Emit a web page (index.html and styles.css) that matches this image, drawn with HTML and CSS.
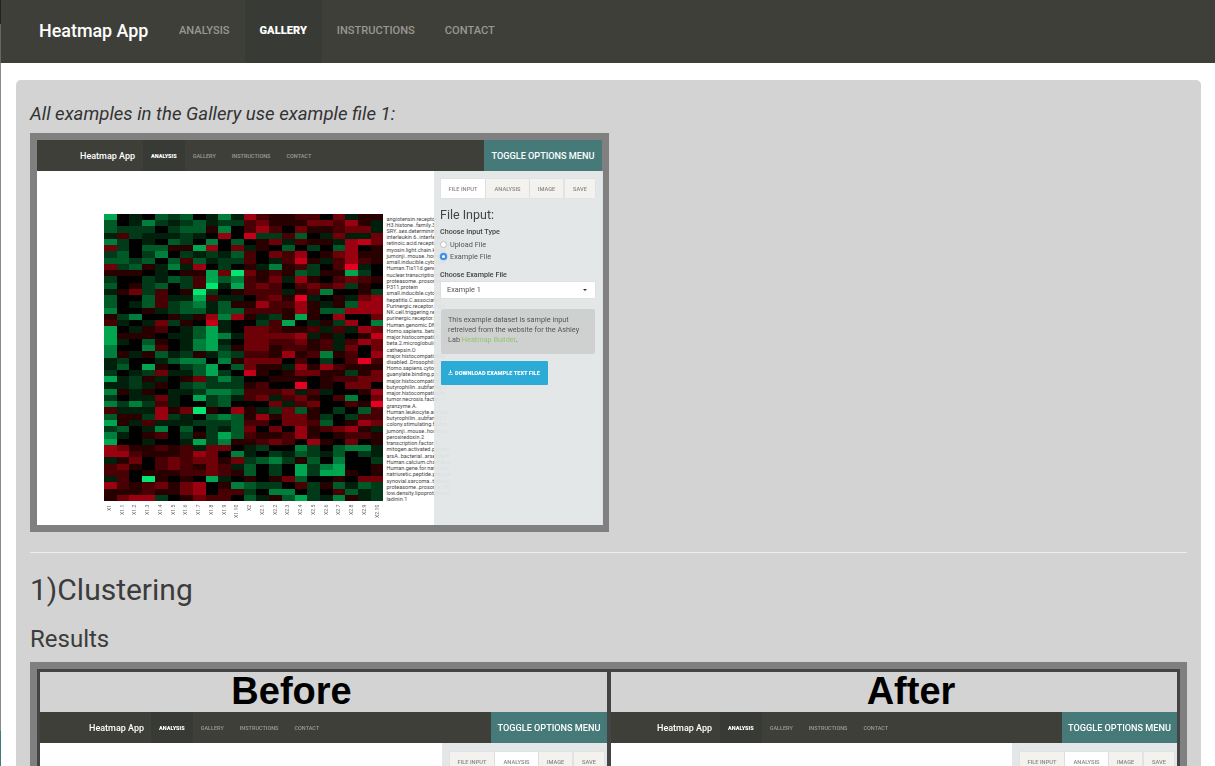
FILE: index.html
```html
<!DOCTYPE html>
<html lang="en">
<head>
<meta charset="utf-8">
<title>Heatmap App</title>
<link rel="stylesheet" href="styles.css">
</head>
<body>
<div class="edge"></div>
<nav class="navbar">
  <a class="brand">Heatmap App</a>
  <a class="nav-item">Analysis</a>
  <a class="nav-item active">Gallery</a>
  <a class="nav-item">Instructions</a>
  <a class="nav-item">Contact</a>
</nav>
<main class="well">
  <p class="lead">All examples in the Gallery use example file 1:</p>
  <div class="frame">
    <div class="mock mock-main">
      <div class="m-nav">
        <span class="m-brand">Heatmap App</span>
        <span class="m-item active">Analysis</span>
        <span class="m-item">Gallery</span>
        <span class="m-item">Instructions</span>
        <span class="m-item">Contact</span>
        <span class="m-toggle">Toggle Options Menu</span>
      </div>
      <div class="m-body">
        <div class="m-plot">
          <div class="hm-row">
            <div class="hm-col">
              <div class="heatmap" id="heatmap"></div>
              <div class="xlabels">
                <span>X1</span><span>X1.1</span><span>X1.2</span><span>X1.3</span><span>X1.4</span><span>X1.5</span><span>X1.6</span><span>X1.7</span><span>X1.8</span><span>X1.9</span><span>X1.10</span><span>X2</span><span>X2.1</span><span>X2.2</span><span>X2.3</span><span>X2.4</span><span>X2.5</span><span>X2.6</span><span>X2.7</span><span>X2.8</span><span>X2.9</span><span>X2.10</span>
              </div>
            </div>
            <div class="ylabels">
              <span>angiotensin.receptor..1</span><span>H3.histone..family.3A</span><span>SRY..sex.determining.r</span><span>interleukin.6..interferon</span><span>retinoic.acid.receptor..</span><span>myosin.light.chain.kinas</span><span>jumonji..mouse..homolo</span><span>small.inducible.cytokine</span><span>Human.Tis11d.gene</span><span>nuclear.transcription.fa</span><span>proteasome..prosome..</span><span>P311.protein</span><span>small.inducible.cytokine</span><span>hepatitis.C.associated.</span><span>Purinergic.receptor..fam</span><span>NK.cell.triggering.recep</span><span>purinergic.receptor.P2Y</span><span>Human.genomic.DNA..ch</span><span>Homo.sapiens..beta..1.</span><span>major.histocompatibility</span><span>beta.2.microglobulin</span><span>cathepsin.O</span><span>major.histocompatibility</span><span>disabled..Drosophila..ho</span><span>Homo.sapiens.cytochron</span><span>guanylate.binding.protei</span><span>major.histocompatibility</span><span>butyrophilin..subfamily.3</span><span>major.histocompatibility</span><span>tumor.necrosis.factor..li</span><span>granzyme.A.</span><span>Human.leukocyte.antigen</span><span>butyrophilin..subfamily.3</span><span>colony.stimulating.factor.1</span><span>jumonji..mouse..homolog</span><span>peroxiredoxin.2</span><span>transcription.factor.4</span><span>mitogen.activated.protein</span><span>arsA..bacterial..arsenite.tr</span><span>Human.calcium.channel.a</span><span>Human.gene.for.natriureti</span><span>natriuretic.peptide.precurs</span><span>synovial.sarcoma..translo</span><span>proteasome..prosome..mi</span><span>low.density.lipoprotein.rec</span><span>ladinin.1</span>
            </div>
          </div>
        </div>
        <aside class="m-side">
          <div class="m-tabs">
            <span class="m-tab current">File Input</span>
            <span class="m-tab">Analysis</span>
            <span class="m-tab">Image</span>
            <span class="m-tab">Save</span>
          </div>
          <h4 class="m-title">File Input:</h4>
          <div class="m-label m-label-first">Choose Input Type</div>
          <div class="m-radio"><i class="dot"></i>Upload File</div>
          <div class="m-radio"><i class="dot checked"></i>Example File</div>
          <div class="m-label m-label-second">Choose Example File</div>
          <div class="m-select">Example 1<i class="caret"></i></div>
          <div class="m-note">
            <span class="m-line">This example dataset is sample input retreived from the website for the Ashley</span>
            <span class="m-line">Lab <a class="m-link">Heatmap Builder</a>.</span>
          </div>
          <div class="m-download">
            <svg class="m-icon" viewBox="0 0 10 10"><path d="M4 0.5h2v3.5h2L5 7 2 4h2zM0.5 7.5h2L5 9l2.500-1.500h2V9.500h-9z" fill="#fff"/></svg>
            Download Example Text File
          </div>
        </aside>
      </div>
    </div>
  </div>
  <hr class="rule">
  <h2 class="section-title">1)Clustering</h2>
  <h3 class="sub-title">Results</h3>
  <div class="frame frame-wide">
    <div class="compare">
      <section class="pane">
        <div class="pane-head pane-before">Before</div>
        <div class="mock mock-before">
          <div class="m-nav">
            <span class="m-brand">Heatmap App</span>
            <span class="m-item active">Analysis</span>
            <span class="m-item">Gallery</span>
            <span class="m-item">Instructions</span>
            <span class="m-item">Contact</span>
            <span class="m-toggle">Toggle Options Menu</span>
          </div>
          <div class="m-body">
            <div class="m-plot"></div>
            <aside class="m-side">
              <div class="m-tabs">
                <span class="m-tab">File Input</span>
                <span class="m-tab current">Analysis</span>
                <span class="m-tab">Image</span>
                <span class="m-tab">Save</span>
              </div>
            </aside>
          </div>
        </div>
      </section>
      <section class="pane">
        <div class="pane-head pane-after">After</div>
        <div class="mock mock-after">
          <div class="m-nav">
            <span class="m-brand">Heatmap App</span>
            <span class="m-item active">Analysis</span>
            <span class="m-item">Gallery</span>
            <span class="m-item">Instructions</span>
            <span class="m-item">Contact</span>
            <span class="m-toggle">Toggle Options Menu</span>
          </div>
          <div class="m-body">
            <div class="m-plot"></div>
            <aside class="m-side">
              <div class="m-tabs">
                <span class="m-tab">File Input</span>
                <span class="m-tab current">Analysis</span>
                <span class="m-tab">Image</span>
                <span class="m-tab">Save</span>
              </div>
            </aside>
          </div>
        </div>
      </section>
    </div>
  </div>
</main>
<script src="heatmap.js"></script>
</body>
</html>
```
FILE: styles.css
```css
* { box-sizing: border-box; }
html, body { height: 766px; overflow: hidden; }
body { margin: 0; background: #fff; color: #3c3c3c; font-family: Roboto, "Liberation Sans", sans-serif; }

.edge { position: absolute; left: 0; top: 0; width: 1px; height: 766px; z-index: 5;
  background: linear-gradient(#23231f 0, #23231f 24px, #666 24px, #666 63px, #8a8a8a 63px, #8a8a8a 731px, #3f7a78 731px); }

.navbar { display: flex; align-items: center; height: 63px; padding: 0 0 2px 39px; background: #3f3f39; }
.brand { width: 125px; color: #fff; font-size: 17.900px; font-weight: 500; }
.nav-item { display: flex; align-items: center; height: 63px; margin-bottom: -2px; padding: 0 15px 2px; color: #98988f; font-size: 11.100px; font-weight: 500; text-transform: uppercase; }
.nav-item.active { background: #383a35; color: #fff; font-weight: 900; }

.well { height: 686px; margin: 17px 14px 0 16px; padding: 22px 14px 0; overflow: hidden; background: #d3d3d3; border-radius: 5px 5px 0 0; }
.lead { margin: 0 0 7px; font-size: 18.600px; line-height: 24px; font-style: italic; color: #333; }

.frame { width: 579px; border: 7px solid #808080; }
.frame-wide { width: 1157px; height: 104px; border-bottom: 0; }
.rule { margin: 20px 0 0; border: 0; border-top: 1px solid #eeeeea; }
.section-title { margin: 18px 0 0; font-size: 30px; line-height: 38px; font-weight: 400; color: #3c3c3c; }
.sub-title { margin: 16px 0 8px; font-size: 24px; line-height: 29px; font-weight: 400; color: #3c3c3c; }

.compare { display: grid; grid-template-columns: 567px 566px; column-gap: 4px; height: 100%; padding: 3px 3px 0; background: #444; overflow: hidden; }
.pane { background: #d3d3d3; min-width: 0; height: 94px; }
.pane-head { height: 40px; font-family: "Liberation Sans", Arial, sans-serif; font-size: 38px; line-height: 38px; font-weight: 700; text-align: center; color: #000; }
.pane-before { padding-right: 64px; }
.pane-after { padding-left: 34px; }

.mock { filter: blur(.25px); background: #fff; }
.mock-main { height: 385px; }
.mock-before, .mock-after { height: 54px; overflow: hidden; }
.m-nav { display: flex; align-items: center; height: 31px; background: #3f3f39; }
.m-brand { color: #fff; font-size: 9px; font-weight: 500; white-space: nowrap; }
.m-item { display: flex; align-items: center; height: 31px; padding: 0 8px; color: #9c9c92; font-size: 5.500px; font-weight: 500; text-transform: uppercase; }
.m-item.active { background: #383a35; color: #fff; font-weight: 900; }
.m-toggle { display: flex; align-items: center; justify-content: center; margin-left: auto; width: 118px; height: 31px; background: #457a78; color: #fff; font-size: 9.150px; font-weight: 500; text-transform: uppercase; }
.mock-before .m-toggle { width: 116px; }
.mock-after .m-toggle { width: 115px; }
.mock-main .m-brand { margin-left: 43px; margin-right: 8px; }
.mock-before .m-brand { margin-left: 49px; margin-right: 7px; }
.mock-after .m-brand { margin-left: 46px; margin-right: 8px; }

.m-body { display: flex; height: 354px; }
.m-plot { width: 397px; flex: none; padding: 43px 0 0 67px; }
.mock-before .m-plot { width: 402px; }
.mock-after .m-plot { width: 401px; }
.m-side { position: relative; z-index: 1; flex: 1; padding: 8px 8px 0 7px; background: rgba(227, 230, 230, .95); }
.mock-before .m-side, .mock-after .m-side { padding: 9px 0 0 8px; }

.hm-row { display: flex; gap: 3px; width: 360px; }
.hm-col { width: 279.500px; flex: none; }
.heatmap { display: grid; grid-template-columns: repeat(22, 1fr); grid-template-rows: repeat(46, 1fr); height: 287px; }
.xlabels { display: grid; grid-template-columns: repeat(22, 1fr); margin: 4px 0 0 -1px; }
.xlabels span { writing-mode: vertical-rl; transform: rotate(180deg); justify-self: center; font-size: 5.200px; color: #666; height: 22px; text-align: right; line-height: 1; }
.ylabels { display: grid; grid-template-rows: repeat(46, 1fr); height: 287px; margin-top: 1.500px; font-size: 5.500px; color: #444; white-space: nowrap; width: 80px; }
.ylabels span { line-height: 6.240px; }

.l-n { background: #000; }
.l-a { background: #00200c; }
.l-b { background: #003a18; }
.l-c { background: #005a28; }
.l-d { background: #007f3c; }
.l-e { background: #00a650; }
.l-f { background: #00e870; }
.l-A { background: #280000; }
.l-B { background: #480004; }
.l-C { background: #6e0008; }
.l-D { background: #9a000f; }
.l-E { background: #c40018; }
.l-F { background: #e80022; }

.m-tabs { display: flex; gap: 1px; height: 19px; }
.m-tab { display: flex; flex: none; align-items: center; justify-content: center; height: 19px; background: #f4f2ee; color: #888; font-size: 5.700px; font-weight: 500; text-transform: uppercase; box-shadow: 0 0 1px rgba(0,0,0,.1); }
.m-tab:nth-child(1) { width: 44px; }
.m-tab:nth-child(2) { width: 43px; }
.m-tab:nth-child(3) { width: 33px; }
.m-tab:nth-child(4) { width: 30px; margin-left: 1px; }
.m-tab.current { background: #fff; }
.m-title { margin: 9px 0 0 -1px; font-size: 12.500px; line-height: 15px; font-weight: 400; color: #444; }
.m-label { font-size: 7.200px; line-height: 8px; font-weight: 500; color: #444; margin-left: -1px; }
.m-label-first { margin-top: 6px; }
.m-label-second { margin-top: 8px; }
.m-radio { display: flex; align-items: center; gap: 3px; height: 12.300px; margin-left: -1px; font-size: 7.300px; color: #555; }
.m-label + .m-radio { margin-top: 2px; }
.dot { width: 7px; height: 7px; border-radius: 50%; background: #fff; border: 1px solid #bbb; }
.dot.checked { background: #fff; border: 2.500px solid #3e8ee8; box-shadow: 0 0 1.500px #4a9bf0; }
.m-select { display: flex; align-items: center; justify-content: space-between; height: 16px; margin-top: 3px; padding: 0 8px 0 6px; background: #fff; font-size: 7.300px; color: #555; box-shadow: 0 0 1px rgba(0,0,0,.2); }
.caret { width: 0; height: 0; border: 2.500px solid transparent; border-top-color: #333; border-bottom: 0; }
.m-note { margin-top: 11px; padding: 6px 7px; height: 45px; background: #cfd1d1; border-radius: 2px; font-size: 7.300px; line-height: 10.300px; color: #555; }
.m-line { display: block; }
.m-link { color: #93c572; }
.m-download { display: flex; align-items: center; gap: 2px; width: 107px; height: 24px; margin-top: 7px; padding-left: 7px; background: #2babd6; border-radius: 1px; color: #fff; font-size: 5.650px; font-weight: 900; text-transform: uppercase; white-space: nowrap; }
.m-icon { width: 5px; height: 5px; }
```
FILE: heatmap.js
```js
// Expression matrix, one row per gene. "." black, a-f green, A-F red, by intensity.
var rows = [
  "e.a.cbc.adaDBAABB.CaAA","c.adbabcabbBCAAACCBDAa","cbbb.bccAd.BDB.CAABCCa","aBbaaaba.D.EbbBc.aCaaC",
  "db.a.cb.d.c.ACaBAAaDEC","Cb.ccAAeD.CaA.c.b.cD.A","bc.bd.babacB.CBD.ACDAA","ccbc.cBcabbB.aBEAaBDBA",
  "CbcAadaD.b.AadABb.BFa.","AAA.a.AAeCfCABAcbAAeb.","b..bacbBecdBACaDA.BCBA","c.Abc.bBfaeBCB.BCBCbA.",
  "aACbB.Afb.ABBBaABd..Ab","c..cBaaeBaa.BCAFa.AaCD","c.acBbcdacAADBBDAaAcDD","d..AabccaccBBBADAccDDD",
  "Abd..AaADdDAabAeA.D..C","Ba.aCbA.Ea..bBe.aAbD.d","e.aAB.acea.CCBAABaBaDC","eAAA.aacedaCCCCDaAa.AE",
  "ea.cA.adea.CCBBCABaBDC","d..dB.adebACCABBABaC.C","dAaAcabAacbBBADABdAB.D","ab..acdd.dACCC.B.b.BFB",
  "ac.eA.bce.cCAAaDADBAAA","b.abCaaceb.EA.ACCAAbAC","eabAa.ACbdb..AAA.ABBCC","aabaA.bcbbbAB..F.A.CC.",
  "dAaA.aabddcBBBCaBa..AD","b.aaCa.ebcaBCaBCA.Bd.C","dbdbBa..bc...CaBC..BAF","BaaaDACfA.DAabCcA.b.cB",
  "cAAbDba.cdcADACCAb.bBB","eAaBaaabbbcBB.CCBc.ADC","bc.ad.c.bacC.C.DABCDAa","da.AB.bAbecBAABDA.ABBA",
  "e..a..aebdAABCB.DA.C.A","DCAABABaCC.ab..db.cdda","DDBAAABDC.da.bacbac.ba","aAC.BCBCCACbcdbAc.d..b",
  "BCA.BCBACBac.b.ebde..A","BB.AAABBCBAc.b.ebeeA.A","aB.fA.A.ea.A.ACc..A.CC","DBABCACD.Adcbb.BbAcacb",
  "AAABAACD.BBb.dd.b.Bcab","ACDDb.ACBB.caAcebadAab"
];
var target = document.getElementById("heatmap");
rows.forEach(function (row) {
  for (var i = 0; i < 22; i++) {
    var c = row.charAt(i) || ".";
    var el = document.createElement("div");
    el.className = "l-" + (c === "." ? "n" : c);
    target.appendChild(el);
  }
});
```
